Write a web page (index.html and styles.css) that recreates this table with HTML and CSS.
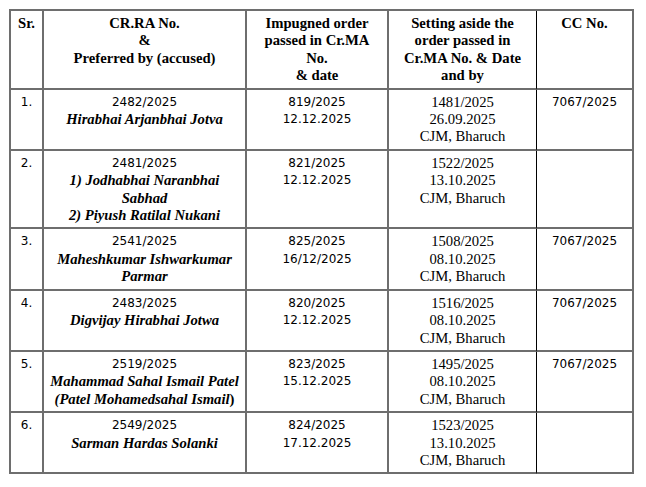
FILE: index.html
```html
<!DOCTYPE html>
<html>
<head>
<meta charset="utf-8">
<link rel="stylesheet" href="styles.css">
</head>
<body>
<table class="grid">
  <colgroup>
    <col class="c-sr"><col class="c-cr"><col class="c-imp"><col class="c-set"><col class="c-cc">
  </colgroup>
  <thead>
    <tr>
      <th>Sr.</th>
      <th>CR.RA No.<br>&amp;<br>Preferred by (accused)</th>
      <th>Impugned order<br>passed in Cr.MA<br>No.<br>&amp; date</th>
      <th>Setting aside the<br>order passed in<br>Cr.MA No. &amp; Date<br>and by</th>
      <th>CC No.</th>
    </tr>
  </thead>
  <tbody>
    <tr>
      <td class="sans">1.</td>
      <td><div class="sans">2482/2025</div><div class="name">Hirabhai Arjanbhai Jotva</div></td>
      <td class="sans">819/2025<br>12.12.2025</td>
      <td>1481/2025<br>26.09.2025<br>CJM, Bharuch</td>
      <td class="sans">7067/2025</td>
    </tr>
    <tr>
      <td class="sans">2.</td>
      <td><div class="sans">2481/2025</div><div class="name">1) Jodhabhai Naranbhai<br>Sabhad<br>2) Piyush Ratilal Nukani</div></td>
      <td class="sans">821/2025<br>12.12.2025</td>
      <td>1522/2025<br>13.10.2025<br>CJM, Bharuch</td>
      <td class="sans"></td>
    </tr>
    <tr>
      <td class="sans">3.</td>
      <td><div class="sans">2541/2025</div><div class="name">Maheshkumar Ishwarkumar<br>Parmar</div></td>
      <td class="sans">825/2025<br>16/12/2025</td>
      <td>1508/2025<br>08.10.2025<br>CJM, Bharuch</td>
      <td class="sans">7067/2025</td>
    </tr>
    <tr>
      <td class="sans">4.</td>
      <td><div class="sans">2483/2025</div><div class="name">Digvijay Hirabhai Jotwa</div></td>
      <td class="sans">820/2025<br>12.12.2025</td>
      <td>1516/2025<br>08.10.2025<br>CJM, Bharuch</td>
      <td class="sans">7067/2025</td>
    </tr>
    <tr>
      <td class="sans">5.</td>
      <td><div class="sans">2519/2025</div><div class="name">Mahammad Sahal Ismail Patel<br>(Patel Mohamedsahal Ismail<span class="upright">)</span></div></td>
      <td class="sans">823/2025<br>15.12.2025</td>
      <td>1495/2025<br>08.10.2025<br>CJM, Bharuch</td>
      <td class="sans">7067/2025</td>
    </tr>
    <tr>
      <td class="sans">6.</td>
      <td><div class="sans">2549/2025</div><div class="name">Sarman Hardas Solanki</div></td>
      <td class="sans">824/2025<br>17.12.2025</td>
      <td>1523/2025<br>13.10.2025<br>CJM, Bharuch</td>
      <td class="sans"></td>
    </tr>
  </tbody>
</table>
</body>
</html>
```

FILE: styles.css
```css
html, body {
  margin: 0;
  padding: 0;
  background: #ffffff;
}

body {
  padding: 9px 0 0 9px;
  font-family: "Liberation Serif", "Times New Roman", serif;
  font-size: 14.67px;
  line-height: 17.4px;
  color: #000000;
}

.grid {
  border-collapse: separate;
  border-spacing: 0;
  table-layout: fixed;
  width: 625px;
  border-left: 2px solid #6e6e6e;
  border-top: 2px solid #6e6e6e;
}

.c-sr { width: 33px; }
.c-cr { width: 203px; }
.c-imp { width: 142px; }
.c-set { width: 148px; }
.c-cc { width: 97px; }

.grid th,
.grid td {
  vertical-align: top;
  text-align: center;
  padding: 4px 1px 3px 1px;
  border-right: 2px solid #6e6e6e;
  border-bottom: 2px solid #6e6e6e;
  white-space: nowrap;
}

.grid th {
  font-weight: bold;
}

.grid th:nth-child(4),
.grid td:nth-child(4) {
  border-right: 1px solid #000000;
}

.sans {
  font-family: "DejaVu Sans", "Verdana", sans-serif;
  font-size: 12px;
}

.name {
  font-weight: bold;
  font-style: italic;
}

.upright {
  font-style: normal;
}
```
